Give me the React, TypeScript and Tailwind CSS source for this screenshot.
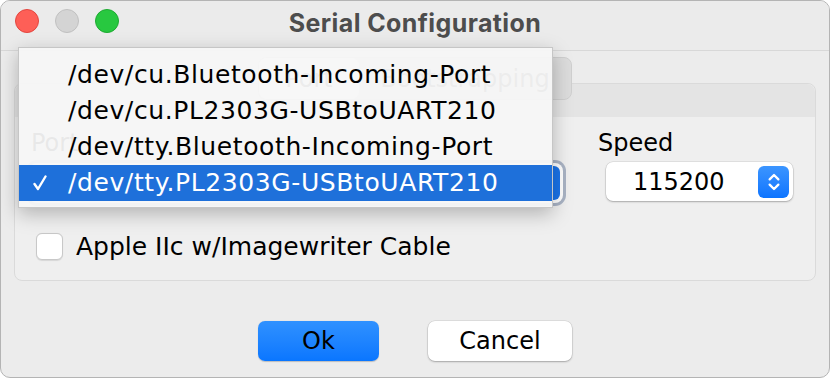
import React from "react";

const ports = [
  "/dev/cu.Bluetooth-Incoming-Port",
  "/dev/cu.PL2303G-USBtoUART210",
  "/dev/tty.Bluetooth-Incoming-Port",
  "/dev/tty.PL2303G-USBtoUART210",
];

function Chevrons({ className }: { className?: string }) {
  return (
    <svg viewBox="0 0 16 22" className={className} fill="none" stroke="currentColor" strokeWidth="2.6" strokeLinecap="round" strokeLinejoin="round">
      <path d="M3 8 L8 3 L13 8" />
      <path d="M3 14 L8 19 L13 14" />
    </svg>
  );
}

function Check({ className }: { className?: string }) {
  return (
    <svg viewBox="0 0 14 16" className={className} fill="none" stroke="currentColor" strokeWidth="2.4" strokeLinecap="round" strokeLinejoin="round">
      <path d="M1.5 9 L5 14 L12.5 1.5" />
    </svg>
  );
}

function TrafficLights() {
  return (
    <div className="flex gap-[16px] pl-[14px]">
      <div className="w-[24px] h-[24px] rounded-full bg-[#fe5f57] border border-[#e2463f]" />
      <div className="w-[24px] h-[24px] rounded-full bg-[#d4d4d4] border border-[#c0c0c0]" />
      <div className="w-[24px] h-[24px] rounded-full bg-[#28c840] border border-[#1eaa32]" />
    </div>
  );
}

export default function App() {
  return (
    <div className="w-[830px] h-[378px] bg-white" style={{ fontFamily: '"DejaVu Sans", "Liberation Sans", sans-serif' }}>
      <div className="relative w-full h-full rounded-[10px] border border-[#b4b4b4] bg-[#ececec] overflow-hidden flex flex-col">
        {/* title bar */}
        <div className="relative h-[50px] shrink-0 flex items-start pt-[8px] bg-[#ebebeb] border-b border-[#d8d8d8]">
          <TrafficLights />
          <div
            className="absolute inset-x-0 top-[4px] text-center text-[25px] tracking-[0.4px] font-bold text-[#4d4d4d]"
            style={{ fontFamily: "Inter, sans-serif" }}
          >
            Serial Configuration
          </div>
        </div>

        {/* body */}
        <div className="px-[13px] pt-[32px]">
          <div className="relative h-[198px] rounded-[8px] border border-[#dadada] bg-[#efefef] flex flex-col">
            <div className="h-[33px] shrink-0 rounded-t-[8px] bg-[#e4e4e4]" />

            {/* tabs */}
            <div className="absolute left-1/2 -translate-x-1/2 -top-[27px] w-[314px] h-[43px] rounded-[8px] bg-[#dcdcdc] border border-[#cfcfcf] flex items-center text-[24px] text-[#444]">
              <div className="w-[100px] h-full rounded-[8px] bg-white flex items-center justify-center">Port</div>
              <div className="flex-1 flex items-center justify-center">Bootstrapping</div>
            </div>

            <div className="flex pl-[14px] pt-[11px]">
              <div className="w-[534px] flex flex-col">
                <div className="h-[30px] pl-[2px] text-[24px] leading-[30px] text-black">Port</div>
                <div className="mt-[5px] h-[40px] rounded-[8px] bg-white ring-[3px] ring-[#a9b3c4] flex items-center justify-end pr-[3px]">
                  <div className="w-[31px] h-[34px] rounded-[6px] bg-[#1a74ea] flex items-center justify-center text-white">
                    <Chevrons className="w-[14px] h-[22px]" />
                  </div>
                </div>
              </div>
              <div className="ml-[35px] flex flex-col">
                <div className="h-[30px] text-[24px] leading-[30px] text-black">Speed</div>
                <div className="mt-[4px] ml-[8px] w-[187px] h-[39px] rounded-[7px] bg-white shadow-[0_0_0_0.5px_rgba(0,0,0,0.12),0_1px_2px_rgba(0,0,0,0.25)] flex items-center pl-[27px] pr-[4px]">
                  <span className="flex-1 text-[24px] text-black">115200</span>
                  <div className="w-[31px] h-[32px] rounded-[6px] bg-gradient-to-b from-[#3b95ff] to-[#0b74ff] flex items-center justify-center text-white">
                    <Chevrons className="w-[14px] h-[22px]" />
                  </div>
                </div>
              </div>
            </div>

            <div className="flex items-center pl-[21px] mt-[25px] gap-[13px]">
              <div className="w-[27px] h-[27px] rounded-[6px] bg-white border border-[#c8c8c8] shadow-[0_0.5px_1px_rgba(0,0,0,0.1)]" />
              <span className="text-[25px] text-black">Apple IIc w/Imagewriter Cable</span>
            </div>
          </div>
        </div>

        {/* buttons */}
        <div className="flex justify-center gap-[49px] mt-[40px]">
          <button className="w-[121px] h-[40px] rounded-[7px] bg-gradient-to-b from-[#2f91ff] to-[#0976ff] text-[24px] text-black shadow-[0_0.5px_1px_rgba(0,0,0,0.2)]">
            Ok
          </button>
          <button className="w-[144px] h-[40px] rounded-[7px] bg-white text-[24px] text-black shadow-[0_0_0_0.5px_rgba(0,0,0,0.12),0_1px_2px_rgba(0,0,0,0.25)]">
            Cancel
          </button>
        </div>

        {/* open popup menu */}
        <div className="absolute left-[17px] top-[46px] w-[535px] h-[161px] bg-[#f6f6f6]/[0.94] border border-[#c6c6c6] shadow-[0_6px_18px_rgba(0,0,0,0.25)] pt-[9px]">
          {ports.map((p, i) => {
            const sel = i === ports.length - 1;
            return (
              <div
                key={p}
                className={`h-[36px] flex items-center text-[25px] tracking-[0.6px] ${sel ? "bg-[#156ad9]/[0.96] text-white" : "text-black"}`}
              >
                <span className="w-[49px] pl-[14px] flex items-center">
                  {sel ? <Check className="w-[14px] h-[16px]" /> : null}
                </span>
                <span>{p}</span>
              </div>
            );
          })}
        </div>
      </div>
    </div>
  );
}
